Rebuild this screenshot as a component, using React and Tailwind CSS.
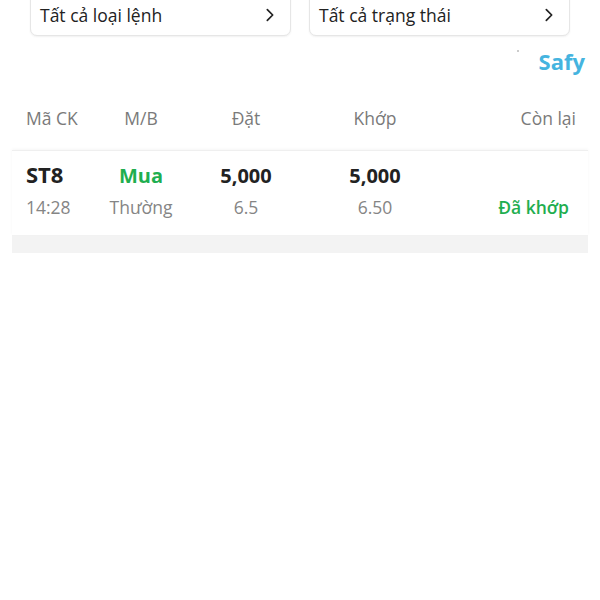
import React from 'react';

function Chevron() {
  return (
    <svg className="w-[16px] h-[16px]" viewBox="0 0 24 24" fill="none" stroke="#222" strokeWidth={2.6} strokeLinecap="round" strokeLinejoin="round">
      <path d="M8 4l8 8-8 8" />
    </svg>
  );
}

export default function App() {
  const font = { fontFamily: '"Open Sans", "Noto Sans", sans-serif' };
  return (
    <div className="w-[600px] h-[600px] bg-white overflow-hidden relative" style={font}>
      {/* Filters */}
      <div className="flex gap-[18px] px-[30px] -mt-[12px]">
        <div className="flex-1 h-[48px] pt-[6px] flex items-center justify-between pl-[9px] pr-[12px] bg-white border border-[#e6e6e6] rounded-b-[7px] shadow-[0_1px_2px_rgba(0,0,0,0.06)]">
          <span className="text-[17.5px] text-[#222]">Tất cả loại lệnh</span>
          <Chevron />
        </div>
        <div className="flex-1 h-[48px] pt-[6px] flex items-center justify-between pl-[9px] pr-[12px] bg-white border border-[#e6e6e6] rounded-b-[7px] shadow-[0_1px_2px_rgba(0,0,0,0.06)]">
          <span className="text-[17.5px] text-[#222]">Tất cả trạng thái</span>
          <Chevron />
        </div>
      </div>

      {/* Brand */}
      <div className="flex justify-end items-start pr-[15px] mt-[10px] h-[40px]">
        <span className="w-[2px] h-[2px] bg-[#bbb] rounded-full mr-[20px] mt-[4px]"></span>
        <span className="text-[22px] font-bold text-[#45b4df] leading-[30px]">Safy</span>
      </div>

      {/* Header */}
      <div className="flex items-center pl-[26px] pr-[24px] h-[64px] text-[17.5px] text-[#7a7a7a]">
        <div className="w-[80px]">Mã CK</div>
        <div className="w-[70px] text-center">M/B</div>
        <div className="w-[100px] ml-[20px] text-center">Đặt</div>
        <div className="w-[100px] ml-[29px] text-center">Khớp</div>
        <div className="flex-1 text-right">Còn lại</div>
      </div>

      {/* Order card */}
      <div className="mx-[12px] bg-[#f3f3f3] pb-[18px]">
        <div className="bg-white border-t border-[#efefef] shadow-[0_-1px_3px_rgba(0,0,0,0.04)] pl-[14px] pr-[19px] pt-[10px] h-[85px]">
          <div className="flex items-center h-[30px]">
            <div className="w-[80px] text-[22px] font-bold text-[#222] leading-[28px] mb-[5px]">ST8</div>
            <div className="w-[70px] text-center text-[20px] font-bold text-[#1fae50] mb-[1px]">Mua</div>
            <div className="w-[100px] ml-[20px] text-center text-[20px] font-bold text-[#222] mb-[1px]">5,000</div>
            <div className="w-[100px] ml-[29px] text-center text-[20px] font-bold text-[#222] mb-[1px]">5,000</div>
            <div className="flex-1"></div>
          </div>
          <div className="flex items-center h-[33px] text-[17.5px] text-[#858585]">
            <div className="w-[80px]">14:28</div>
            <div className="w-[70px] text-center whitespace-nowrap">Thường</div>
            <div className="w-[100px] ml-[20px] text-center">6.5</div>
            <div className="w-[100px] ml-[29px] text-center">6.50</div>
            <div className="flex-1 text-right font-semibold text-[#1fae50]">Đã khớp</div>
          </div>
        </div>
      </div>
    </div>
  );
}
